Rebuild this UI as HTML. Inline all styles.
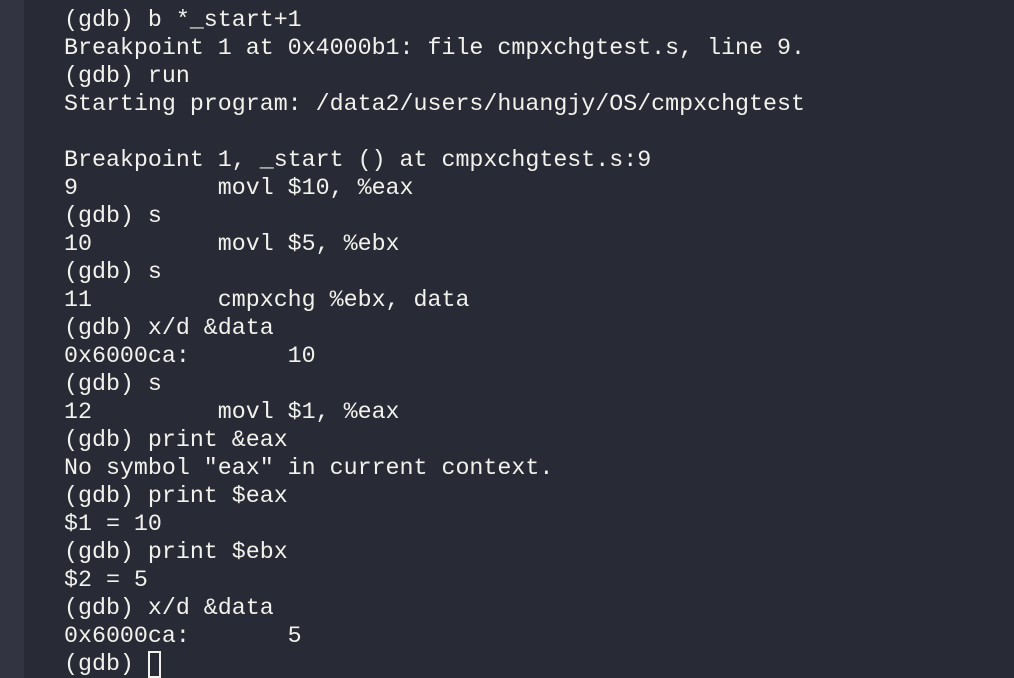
<!DOCTYPE html>
<html><head><meta charset="utf-8"><style>
html,body{margin:0;padding:0;width:1014px;height:678px;overflow:hidden;background:#282a35;}
.side{position:absolute;left:0;top:0;width:24px;height:678px;background:#323442;}
pre{position:absolute;left:64px;top:6px;margin:0;font-family:"Liberation Mono",monospace;font-size:23.3px;line-height:28px;color:#f2f2ec;}
.cur{display:inline-block;width:13px;height:27px;border:2px solid #f2f2ec;vertical-align:-8px;box-sizing:border-box;}
</style></head><body>
<div class="side"></div>
<pre>(gdb) b *_start+1
Breakpoint 1 at 0x4000b1: file cmpxchgtest.s, line 9.
(gdb) run
Starting program: /data2/users/huangjy/OS/cmpxchgtest

Breakpoint 1, _start () at cmpxchgtest.s:9
9          movl $10, %eax
(gdb) s
10         movl $5, %ebx
(gdb) s
11         cmpxchg %ebx, data
(gdb) x/d &amp;data
0x6000ca:       10
(gdb) s
12         movl $1, %eax
(gdb) print &amp;eax
No symbol "eax" in current context.
(gdb) print $eax
$1 = 10
(gdb) print $ebx
$2 = 5
(gdb) x/d &amp;data
0x6000ca:       5
(gdb) <span class="cur"></span></pre>
</body></html>
